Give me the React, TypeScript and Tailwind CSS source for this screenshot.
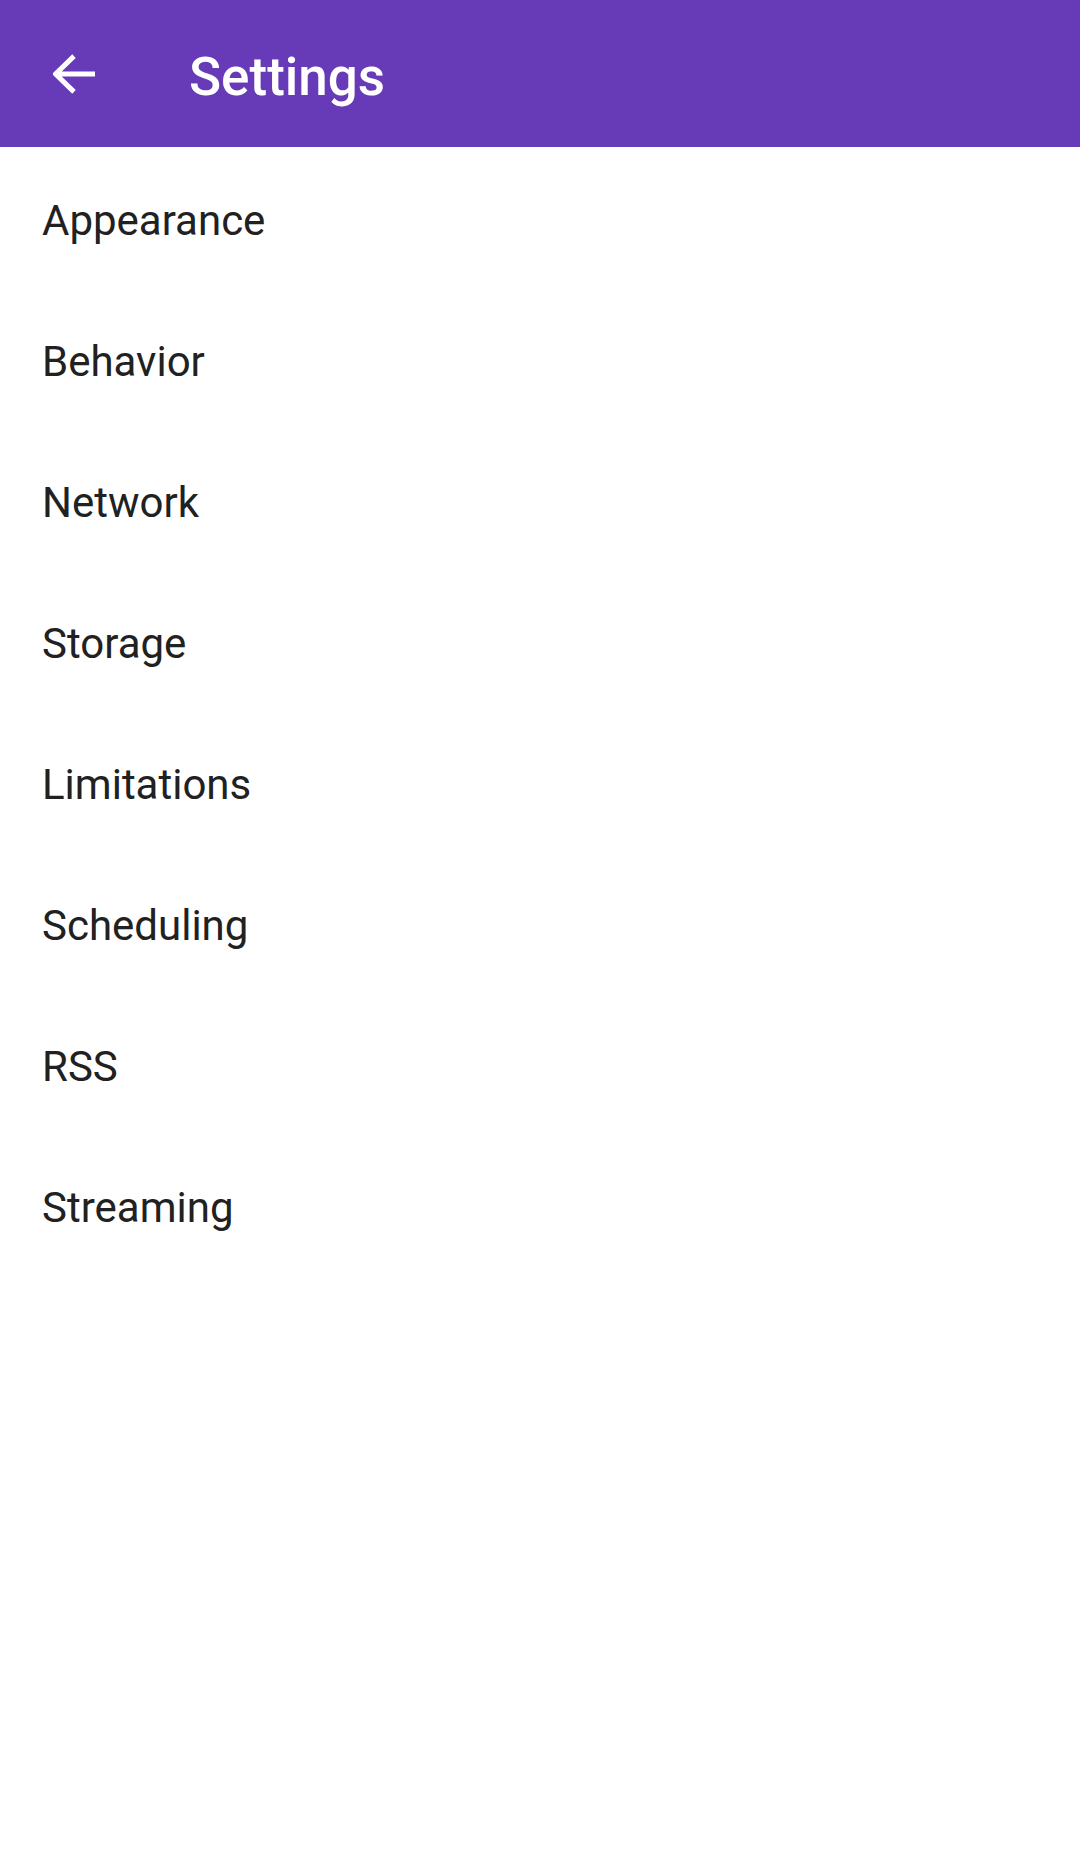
const sections = [
  "Appearance",
  "Behavior",
  "Network",
  "Storage",
  "Limitations",
  "Scheduling",
  "RSS",
  "Streaming",
];

function Toolbar() {
  return (
    <header className="h-[147px] bg-[#673ab7] flex items-center text-white">
      <button className="w-[63px] h-[63px] ml-[42px] flex items-center justify-center">
        <svg width="42" height="42" viewBox="0 0 16 16" fill="none">
          <path
            d="M16 8H1.6M8 1.2L1 8l7 6.8"
            stroke="white"
            strokeWidth="1.9"
            strokeLinecap="butt"
          />
        </svg>
      </button>
      <h1 className="ml-[84px] mt-[7px] text-[53px] leading-none font-medium font-['Roboto',sans-serif]">
        Settings
      </h1>
    </header>
  );
}

export default function App() {
  return (
    <div className="w-[1080px] min-h-[1858px] bg-white font-['Roboto',sans-serif]">
      <Toolbar />
      <ul className="pt-[3px]">
        {sections.map((name) => (
          <li
            key={name}
            className="h-[141px] leading-[141px] pl-[42px] text-[42px] text-[#212121]"
          >
            {name}
          </li>
        ))}
      </ul>
    </div>
  );
}
